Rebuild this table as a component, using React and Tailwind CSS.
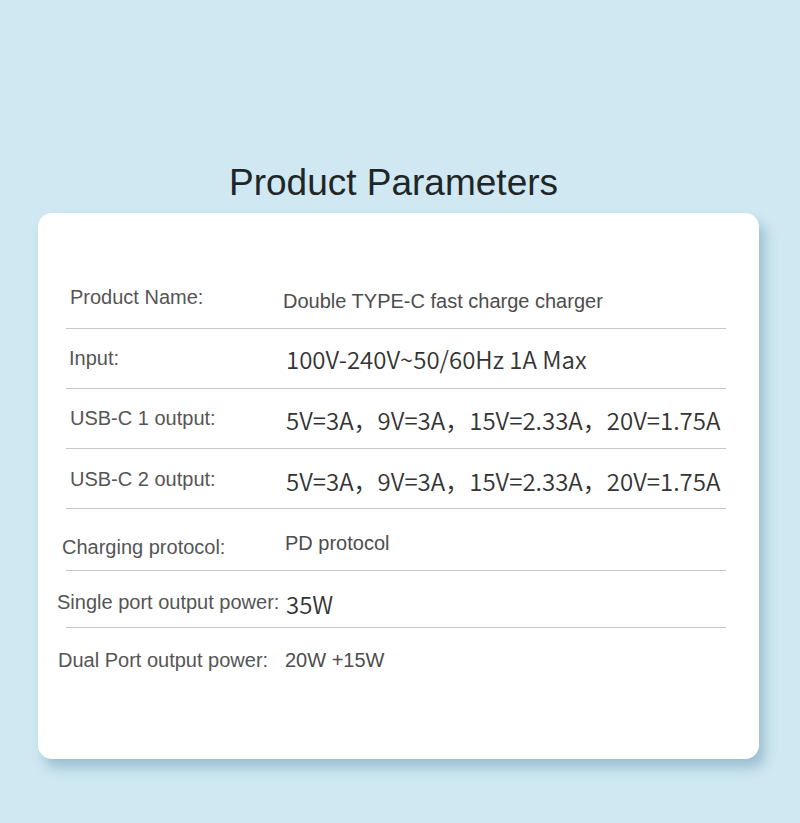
const rows = [
  {
    label: "Product Name:",
    value: "Double TYPE-C fast charge charger",
    cjk: false,
    h: "h-[60px]",
    labelCls: "ml-[4px] -mt-[4px]",
    valueCls: "ml-[0px] mt-[4px]",
  },
  {
    label: "Input:",
    value: "100V-240V~50/60Hz 1A Max",
    cjk: true,
    h: "h-[60px]",
    labelCls: "ml-[3px] -mt-[2px]",
    valueCls: "ml-[3px] mt-[0px]",
  },
  {
    label: "USB-C 1 output:",
    value: "5V=3A，9V=3A，15V=2.33A，20V=1.75A",
    cjk: true,
    h: "h-[60px]",
    labelCls: "ml-[4px] -mt-[2px]",
    valueCls: "ml-[3px] mt-[2px]",
  },
  {
    label: "USB-C 2 output:",
    value: "5V=3A，9V=3A，15V=2.33A，20V=1.75A",
    cjk: true,
    h: "h-[60px]",
    labelCls: "ml-[4px] mt-[1px]",
    valueCls: "ml-[3px] mt-[4px]",
  },
  {
    label: "Charging protocol:",
    value: "PD protocol",
    cjk: false,
    h: "h-[62px]",
    labelCls: "-ml-[4px] mt-[14px]",
    valueCls: "ml-[2px] mt-[6px]",
  },
  {
    label: "Single port output power:",
    value: "35W",
    cjk: true,
    h: "h-[57px]",
    labelCls: "-ml-[9px] mt-[6px]",
    valueCls: "ml-[3px] mt-[10px]",
  },
  {
    label: "Dual Port output power:",
    value: "20W +15W",
    cjk: false,
    h: "h-[64px]",
    labelCls: "-ml-[8px] mt-[0px]",
    valueCls: "ml-[2px] mt-[0px]",
  },
];

function ParamRow({ row, last }) {
  return (
    <div
      className={`flex items-center ${row.h} ${
        last ? "" : "border-b border-[#c6c6c6]"
      }`}
    >
      <div className="flex w-[217px] shrink-0 items-center">
        <span
          className={`whitespace-nowrap text-[20px] leading-[24px] text-[#555555] ${row.labelCls}`}
        >
          {row.label}
        </span>
      </div>
      {row.cjk ? (
        <span
          className={`whitespace-nowrap font-['Noto_Sans_CJK_SC',sans-serif] text-[24px] font-[350] leading-[30px] text-[#333333] ${row.valueCls}`}
        >
          {row.value}
        </span>
      ) : (
        <span
          className={`whitespace-nowrap text-[20px] leading-[24px] text-[#4d4d4d] ${row.valueCls}`}
        >
          {row.value}
        </span>
      )}
    </div>
  );
}

export default function App() {
  return (
    <div className="h-[823px] w-[800px] overflow-hidden bg-[#cfe8f2] font-['Liberation_Sans',Arial,sans-serif]">
      <h1 className="pl-[229px] pt-[161px] text-[37px] leading-[44px] text-[#1f2629]">
        Product Parameters
      </h1>

      <div className="ml-[38px] mt-[8px] h-[546px] w-[721px] rounded-[14px] bg-white pl-[28px] pr-[33px] pt-[56px] shadow-[6px_9px_12px_rgba(95,145,170,0.45)]">
        {rows.map((row, i) => (
          <ParamRow key={i} row={row} last={i === rows.length - 1} />
        ))}
      </div>
    </div>
  );
}
